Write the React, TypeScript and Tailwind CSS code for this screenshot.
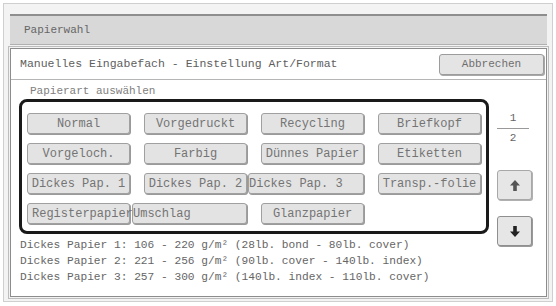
const mono = { fontFamily: '"Liberation Mono", "DejaVu Sans Mono", monospace' };

interface PaperButton {
  label: string;
  // how the label sits in the button, the reference has a few misaligned ones
  textClass: string;
}

const buttons: PaperButton[] = [
  { label: 'Normal', textClass: 'justify-center' },
  { label: 'Vorgedruckt', textClass: 'justify-center' },
  { label: 'Recycling', textClass: 'justify-center' },
  { label: 'Briefkopf', textClass: 'justify-center' },
  { label: 'Vorgeloch.', textClass: 'justify-center' },
  { label: 'Farbig', textClass: 'justify-center' },
  { label: 'Dünnes Papier', textClass: 'justify-center' },
  { label: 'Etiketten', textClass: 'justify-center' },
  { label: 'Dickes Pap. 1', textClass: 'justify-center' },
  { label: 'Dickes Pap. 2', textClass: 'justify-center' },
  { label: 'Dickes Pap. 3', textClass: 'justify-start -ml-[13px]' },
  { label: 'Transp.-folie', textClass: 'justify-center' },
  { label: 'Registerpapier', textClass: 'justify-start pl-[4px]' },
  { label: 'Umschlag', textClass: 'justify-start -ml-[12px]' },
  { label: 'Glanzpapier', textClass: 'justify-center' },
];

const weights = [
  'Dickes Papier 1: 106 - 220 g/m² (28lb. bond - 80lb. cover)',
  'Dickes Papier 2: 221 - 256 g/m² (90lb. cover - 140lb. index)',
  'Dickes Papier 3: 257 - 300 g/m² (140lb. index - 110lb. cover)',
];

function Arrow({ down }: { down?: boolean }) {
  return (
    <svg width="12" height="13" viewBox="0 0 12 13" className={down ? 'rotate-180' : ''}>
      <path d="M6 1 L11 6.5 H7.8 V12 H4.2 V6.5 H1 Z" fill={down ? '#222' : '#555'} />
    </svg>
  );
}

export default function App() {
  return (
    <div className="w-[556px] h-[306px] bg-white pt-[3px] pl-[3px]" style={mono}>
      <div className="w-[550px] h-[299px] border border-[#cfcfcf] bg-[#f3f3f3] pt-[10px] pl-[6px] flex flex-col gap-[3px]">
        {/* Title bar */}
        <div className="w-[537px] h-[31px] bg-[#d8d8d8] border-t-2 border-[#8e8e8e] border-b border-b-[#b0b0b0] flex items-center pl-[14px] text-[11px] text-[#666]">
          Papierwahl
        </div>

        {/* Main panel */}
        <div className="w-[537px] h-[249px] bg-white border border-[#8c8c8c] outline outline-1 outline-offset-[1px] outline-[#bdbdbd] flex flex-col">
          {/* Header */}
          <div className="h-[31px] flex items-center justify-between pl-[9px] pr-[2px] border-b border-[#b5b5b5] shrink-0">
            <span className="text-[11.5px] text-[#5e5e5e]">
              Manuelles Eingabefach - Einstellung Art/Format
            </span>
            <button className="w-[105px] h-[21px] rounded-[3px] border border-[#9c9c9c] bg-[#e4e4e4] shadow-[1px_1px_0_#a8a8a8] text-[11px] text-[#6e6e6e]">
              Abbrechen
            </button>
          </div>

          {/* Body */}
          <div className="flex">
            <div className="flex flex-col">
              <div className="pl-[19px] pt-[4px] h-[19px] leading-[14px] text-[11px] text-[#808080]">
                Papierart auswählen
              </div>
              <div className="ml-[8px] w-[470px] h-[135px] border-[3px] border-[#1a1a1a] rounded-[8px] pl-[5px] pt-[11px]">
                <div className="grid grid-cols-[103px_103px_103px_103px] gap-x-[14px] gap-y-[9px]">
                  {buttons.map((b) => (
                    <div
                      key={b.label}
                      className={`h-[21px] rounded-[3px] border border-[#a0a0a0] bg-[#e3e3e3] shadow-[1px_1px_0_#9a9a9a] flex items-center whitespace-nowrap text-[12px] text-[#747474] ${b.textClass}`}
                    >
                      <span>{b.label}</span>
                    </div>
                  ))}
                </div>
              </div>
              <div className="pl-[9px] pt-[3px] text-[11.2px] leading-[16px] text-[#666]">
                {weights.map((w) => (
                  <div key={w}>{w}</div>
                ))}
              </div>
            </div>

            {/* Pager */}
            <div className="ml-[8px] pt-[31px] flex flex-col items-start">
              <div className="w-[32px] text-center text-[11px] leading-[14px] text-[#666]">1</div>
              <div className="w-[32px] h-px bg-[#999] mt-[3px]" />
              <div className="w-[32px] text-center text-[11px] leading-[14px] text-[#666] mt-[2px]">2</div>
              <button className="mt-[25px] w-[35px] h-[30px] rounded-[3px] border border-[#a8a8a8] bg-[#e6e6e6] shadow-[1px_1px_0_#b0b0b0] flex items-center justify-center">
                <Arrow />
              </button>
              <button className="mt-[16px] w-[35px] h-[30px] rounded-[3px] border border-[#8f8f8f] bg-[#e6e6e6] shadow-[1px_1px_0_#999] flex items-center justify-center">
                <Arrow down />
              </button>
            </div>
          </div>
        </div>
      </div>
    </div>
  );
}
